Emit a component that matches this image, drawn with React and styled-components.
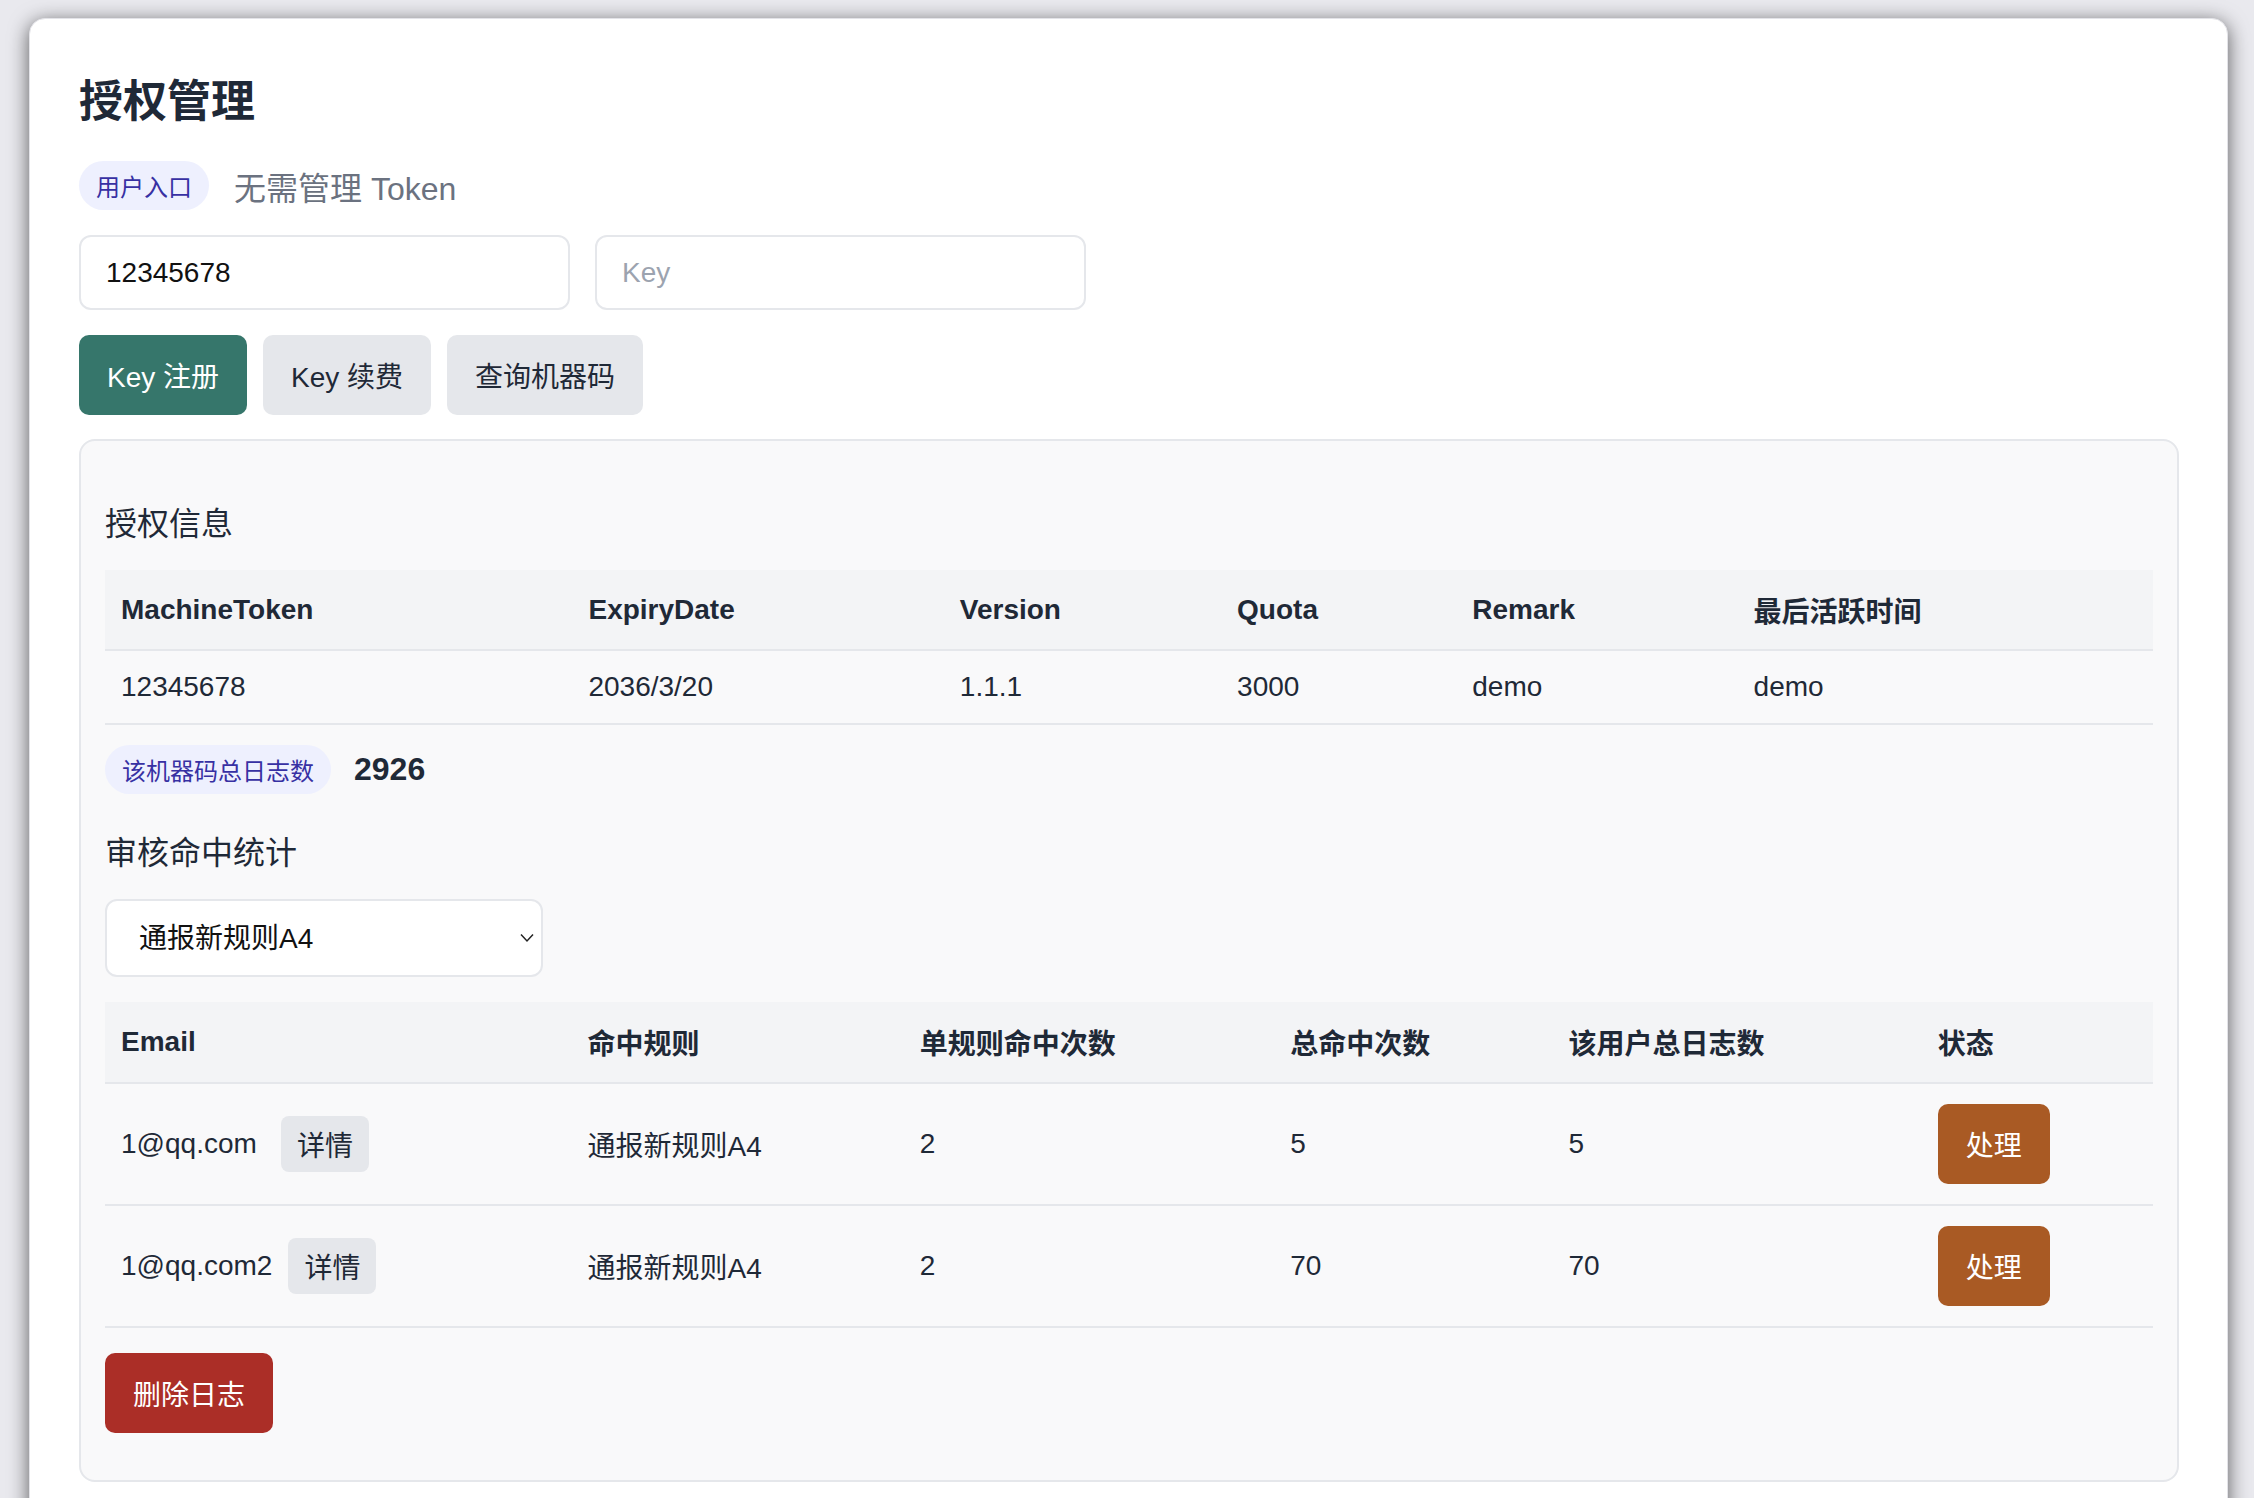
import React, { useState } from 'react';
import styled, { createGlobalStyle } from 'styled-components';

const GlobalStyle = createGlobalStyle`
  html, body {
    margin: 0;
    padding: 0;
    overflow: hidden;
    background: #e9e9ee;
  }
  body {
    font-family: "Liberation Sans", "Noto Sans CJK SC", sans-serif;
    color: #1f2937;
  }
  * {
    box-sizing: border-box;
  }
`;

const Page = styled.div`
  padding: 18px 26px 0 29px;
`;

const Card = styled.div`
  width: 2199px;
  min-height: 1560px;
  background: #ffffff;
  border: 1px solid #e3e3e8;
  border-radius: 16px;
  box-shadow: 0 4px 20px rgba(0, 0, 0, 0.62);
  padding: 56px 49px 40px;
`;

const Title = styled.h1`
  margin: 0;
  font-size: 44px;
  line-height: 53px;
  font-weight: 700;
  color: #1f2937;
`;

const EntryRow = styled.div`
  display: flex;
  align-items: center;
  gap: 25px;
  margin-top: 33px;
`;

const Pill = styled.span`
  display: inline-flex;
  align-items: center;
  height: 49px;
  padding: 0 17px;
  border-radius: 25px;
  background: #eef0fe;
  color: #3730a3;
  font-size: 24px;
`;

const Hint = styled.span`
  font-size: 32px;
  color: #6b7280;
`;

const InputRow = styled.div`
  display: flex;
  gap: 25px;
  margin-top: 25px;
`;

const TextInput = styled.input`
  width: 491px;
  height: 75px;
  padding: 0 25px;
  border: 2px solid #e5e7eb;
  border-radius: 12px;
  background: #fff;
  font-family: inherit;
  font-size: 28px;
  color: #111;
  outline: none;

  &::placeholder {
    color: #9ca3af;
  }
`;

const ButtonRow = styled.div`
  display: flex;
  gap: 16px;
  margin-top: 25px;
`;

const tones = {
  primary: { bg: '#36766b', fg: '#ffffff' },
  muted: { bg: '#e5e7eb', fg: '#1f2937' },
  warn: { bg: '#a95a24', fg: '#ffffff' },
  danger: { bg: '#ab2e27', fg: '#ffffff' },
};

const Button = styled.button`
  height: 80px;
  padding: 0 28px;
  border: none;
  border-radius: 10px;
  background: ${(p) => tones[p.$tone].bg};
  color: ${(p) => tones[p.$tone].fg};
  font-family: inherit;
  font-size: 28px;
  cursor: pointer;
  white-space: nowrap;
`;

const SmallButton = styled.button`
  height: 56px;
  padding: 0 16px;
  border: none;
  border-radius: 8px;
  background: #e5e7eb;
  color: #1f2937;
  font-family: inherit;
  font-size: 28px;
  cursor: pointer;
`;

const Panel = styled.section`
  margin-top: 24px;
  width: 2100px;
  padding: 24px 24px 24px;
  background: #f9f9fa;
  border: 2px solid #e5e7eb;
  border-radius: 16px;
`;

const SectionTitle = styled.h3`
  margin: 35px 0 22px;
  font-size: 32px;
  line-height: 48px;
  font-weight: 400;
  color: #1f2937;
`;

const Table = styled.table`
  width: 100%;
  border-collapse: collapse;
  table-layout: fixed;
  font-size: 28px;
  color: #1f2937;
`;

const Th = styled.th`
  height: ${(p) => p.$h || 80}px;
  padding: 0 16px;
  text-align: left;
  font-weight: 700;
  background: #f3f4f6;
  border-bottom: 2px solid #e5e7eb;
  white-space: nowrap;
`;

const Td = styled.td`
  height: ${(p) => p.$h || 74}px;
  padding: 0 16px;
  text-align: left;
  border-bottom: 2px solid #e5e7eb;
  white-space: nowrap;
`;

const StatRow = styled.div`
  display: flex;
  align-items: center;
  gap: 23px;
  margin-top: 20px;
`;

const StatValue = styled.span`
  font-size: 32px;
  font-weight: 700;
  color: #1f2937;
`;

const SelectWrap = styled.div`
  position: relative;
  width: 438px;
  height: 78px;
`;

const Select = styled.select`
  appearance: none;
  width: 100%;
  height: 100%;
  padding: 0 40px 0 32px;
  border: 2px solid #e5e7eb;
  border-radius: 12px;
  background: #fff;
  font-family: inherit;
  font-size: 28px;
  color: #111;
  outline: none;
`;

const Chevron = styled.svg`
  position: absolute;
  right: 9px;
  top: 34px;
  width: 14px;
  height: 10px;
  pointer-events: none;
`;

const EmailCell = styled.div`
  display: flex;
  align-items: center;
  gap: 16px;
`;

const EmailText = styled.span`
  min-width: 144px;
`;

const DeleteRow = styled.div`
  margin: 25px 0 23px;
`;

const authCols = [467, 371, 277, 235, 281, 415];
const hitCols = [466, 332, 370, 278, 369, 231];

const hits = [
  { email: '1@qq.com', rule: '通报新规则A4', ruleHits: 2, totalHits: 5, logs: 5 },
  { email: '1@qq.com2', rule: '通报新规则A4', ruleHits: 2, totalHits: 70, logs: 70 },
];

export default function App() {
  const [machine, setMachine] = useState('12345678');
  const [key, setKey] = useState('');
  const [rule, setRule] = useState('通报新规则A4');

  return (
    <Page>
      <GlobalStyle />
      <Card>
        <Title>授权管理</Title>
        <EntryRow>
          <Pill>用户入口</Pill>
          <Hint>无需管理 Token</Hint>
        </EntryRow>
        <InputRow>
          <TextInput value={machine} onChange={(e) => setMachine(e.target.value)} />
          <TextInput placeholder="Key" value={key} onChange={(e) => setKey(e.target.value)} />
        </InputRow>
        <ButtonRow>
          <Button $tone="primary">Key 注册</Button>
          <Button $tone="muted">Key 续费</Button>
          <Button $tone="muted">查询机器码</Button>
        </ButtonRow>

        <Panel>
          <SectionTitle>授权信息</SectionTitle>
          <Table>
            <colgroup>
              {authCols.map((w, i) => (
                <col key={i} style={{ width: w }} />
              ))}
            </colgroup>
            <thead>
              <tr>
                <Th>MachineToken</Th>
                <Th>ExpiryDate</Th>
                <Th>Version</Th>
                <Th>Quota</Th>
                <Th>Remark</Th>
                <Th>最后活跃时间</Th>
              </tr>
            </thead>
            <tbody>
              <tr>
                <Td>12345678</Td>
                <Td>2036/3/20</Td>
                <Td>1.1.1</Td>
                <Td>3000</Td>
                <Td>demo</Td>
                <Td>demo</Td>
              </tr>
            </tbody>
          </Table>

          <StatRow>
            <Pill>该机器码总日志数</Pill>
            <StatValue>2926</StatValue>
          </StatRow>

          <SectionTitle>审核命中统计</SectionTitle>
          <SelectWrap>
            <Select value={rule} onChange={(e) => setRule(e.target.value)}>
              <option>通报新规则A4</option>
            </Select>
            <Chevron viewBox="0 0 14 10" fill="none" stroke="#222" strokeWidth="1.5">
              <path d="M1 1.5 L7 8 L13 1.5" />
            </Chevron>
          </SelectWrap>

          <Table style={{ marginTop: 25 }}>
            <colgroup>
              {hitCols.map((w, i) => (
                <col key={i} style={{ width: w }} />
              ))}
            </colgroup>
            <thead>
              <tr>
                <Th $h={81}>Email</Th>
                <Th $h={81}>命中规则</Th>
                <Th $h={81}>单规则命中次数</Th>
                <Th $h={81}>总命中次数</Th>
                <Th $h={81}>该用户总日志数</Th>
                <Th $h={81}>状态</Th>
              </tr>
            </thead>
            <tbody>
              {hits.map((h) => (
                <tr key={h.email}>
                  <Td $h={122}>
                    <EmailCell>
                      <EmailText>{h.email}</EmailText>
                      <SmallButton>详情</SmallButton>
                    </EmailCell>
                  </Td>
                  <Td $h={122}>{h.rule}</Td>
                  <Td $h={122}>{h.ruleHits}</Td>
                  <Td $h={122}>{h.totalHits}</Td>
                  <Td $h={122}>{h.logs}</Td>
                  <Td $h={122}>
                    <Button $tone="warn">处理</Button>
                  </Td>
                </tr>
              ))}
            </tbody>
          </Table>

          <DeleteRow>
            <Button $tone="danger">删除日志</Button>
          </DeleteRow>
        </Panel>
      </Card>
    </Page>
  );
}
